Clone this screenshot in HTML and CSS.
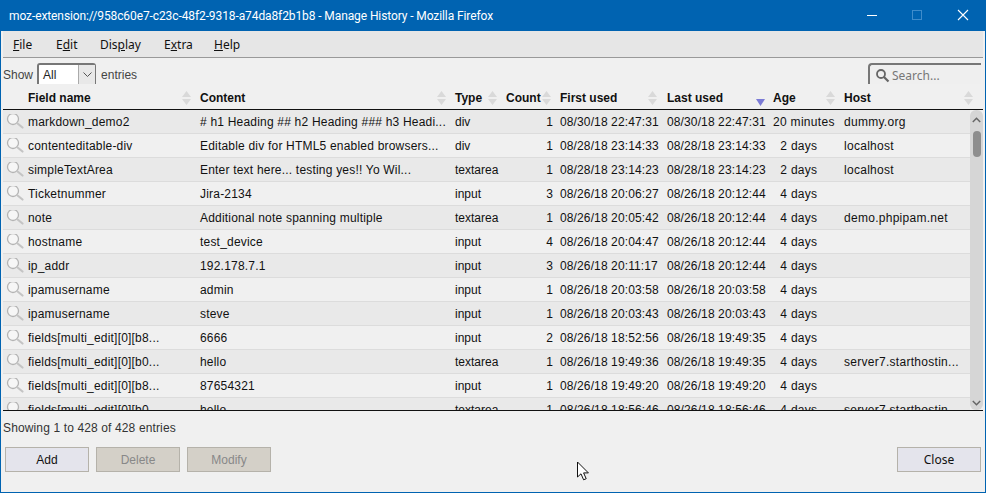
FILE: index.html
```html
<!DOCTYPE html>
<html lang="en">
<head>
  <meta charset="UTF-8" />
  <title>Manage History</title>
  <link rel="stylesheet" href="styles.css">
</head>
<body>
  <svg class="defs" width="0" height="0">
    <symbol id="lens" viewBox="0 0 18 18">
      <circle cx="7" cy="7" r="5.5" fill="#f6f6f6" stroke="#b4b4b4" stroke-width="1.3"/>
      <path d="M11 11l5.5 4.5" stroke="#c4c4c4" stroke-width="2.2" stroke-linecap="round"/>
    </symbol>
  </svg>
  <div class="window">
    <div class="titlebar">
      <span class="title">moz-extension://958c60e7-c23c-48f2-9318-a74da8f2b1b8 - Manage History - Mozilla Firefox</span>
      <svg class="winbtns" width="102" height="31" viewBox="0 0 102 31">
        <path d="M0 15.5h10" stroke="#fff" fill="none"/>
        <rect x="45.5" y="10.5" width="9" height="9" stroke="#3f8ccb" fill="none"/>
        <path d="M91 10l10 10M101 10l-10 10" stroke="#fff" fill="none" stroke-width="1.1"/>
      </svg>
    </div>
    <div class="menubar">
      <span class="menu menu-file"><u>F</u>ile</span>
      <span class="menu menu-edit">E<u>d</u>it</span>
      <span class="menu menu-display">Dis<u>p</u>lay</span>
      <span class="menu menu-extra">E<u>x</u>tra</span>
      <span class="menu"><u>H</u>elp</span>
    </div>
    <div class="toolbar">
      <div class="length">
        <span>Show</span>
        <div class="select">
          <span class="select-value">All</span>
          <span class="select-arrow">
            <svg width="9" height="5" viewBox="0 0 9 5"><path d="M.5.5l4 4 4-4" fill="none" stroke="#555"/></svg>
          </span>
        </div>
        <span>entries</span>
      </div>
      <div class="search">
        <svg width="15" height="15" viewBox="0 0 15 15"><circle cx="6" cy="6" r="4" fill="none" stroke="#666" stroke-width="1.8"/><path d="M9 9l4.5 4.5" stroke="#666" stroke-width="2.2"/></svg>
        <span>Search...</span>
      </div>
    </div>
    <div class="thead" id="thead"></div>
    <div class="tbody-wrap">
      <div class="rows" id="rows"></div>
      <div class="scrollbar">
        <svg width="9" height="6" viewBox="0 0 9 6"><path d="M.8 5l3.7-3.7L8.2 5" fill="none" stroke="#666" stroke-width="1.5"/></svg>
        <div class="thumb"></div>
        <svg class="scroll-down" width="9" height="6" viewBox="0 0 9 6"><path d="M.8 1l3.7 3.7L8.2 1" fill="none" stroke="#666" stroke-width="1.5"/></svg>
      </div>
    </div>
    <div class="info">Showing 1 to 428 of 428 entries</div>
    <div class="buttons">
      <button class="btn">Add</button>
      <button class="btn" disabled>Delete</button>
      <button class="btn" disabled>Modify</button>
      <button class="btn btn-close">Close</button>
    </div>
  </div>
  <svg class="cursor" width="14" height="21" viewBox="0 0 14 21">
    <path d="M1.5 1v15l3.5-3.2 2.6 6 2.6-1.1-2.6-5.8h4.8z" fill="#fff" stroke="#111"/>
  </svg>

  <script>
    const columnas = [
      ["Field name", "c-name"], ["Content", "c-content"], ["Type", "c-type"], ["Count", "c-count"],
      ["First used", "c-first"], ["Last used", "c-last"], ["Age", "c-age"], ["Host", "c-host"]
    ];

    const dos = "\u00a0\u00a02 days";
    const cuatro = "\u00a0\u00a04 days";

    const filas = [
      ["markdown_demo2", "# h1 Heading ## h2 Heading ### h3 Headi...", "div", 1, "08/30/18 22:47:31", "08/30/18 22:47:31", "20 minutes", "dummy.org"],
      ["contenteditable-div", "Editable div for HTML5 enabled browsers...", "div", 1, "08/28/18 23:14:33", "08/28/18 23:14:33", dos, "localhost"],
      ["simpleTextArea", "Enter text here... testing yes!! Yo Wil...", "textarea", 1, "08/28/18 23:14:23", "08/28/18 23:14:23", dos, "localhost"],
      ["Ticketnummer", "Jira-2134", "input", 3, "08/26/18 20:06:27", "08/26/18 20:12:44", cuatro, ""],
      ["note", "Additional note spanning multiple", "textarea", 1, "08/26/18 20:05:42", "08/26/18 20:12:44", cuatro, "demo.phpipam.net"],
      ["hostname", "test_device", "input", 4, "08/26/18 20:04:47", "08/26/18 20:12:44", cuatro, ""],
      ["ip_addr", "192.178.7.1", "input", 3, "08/26/18 20:11:17", "08/26/18 20:12:44", cuatro, ""],
      ["ipamusername", "admin", "input", 1, "08/26/18 20:03:58", "08/26/18 20:03:58", cuatro, ""],
      ["ipamusername", "steve", "input", 1, "08/26/18 20:03:43", "08/26/18 20:03:43", cuatro, ""],
      ["fields[multi_edit][0][b8...", "6666", "input", 2, "08/26/18 18:52:56", "08/26/18 19:49:35", cuatro, ""],
      ["fields[multi_edit][0][b0...", "hello", "textarea", 1, "08/26/18 19:49:36", "08/26/18 19:49:35", cuatro, "server7.starthostin..."],
      ["fields[multi_edit][0][b8...", "87654321", "input", 1, "08/26/18 19:49:20", "08/26/18 19:49:20", cuatro, ""],
      ["fields[multi_edit][0][b0...", "hello", "textarea", 1, "08/26/18 18:56:46", "08/26/18 18:56:46", cuatro, "server7.starthostin..."]
    ];

    document.getElementById("thead").innerHTML = columnas.map(([nombre, clase]) => {
      const orden = nombre === "Last used"
        ? '<svg class="sort" width="9" height="7" viewBox="0 0 9 7"><path d="M0 0h9L4.5 7z" fill="#7b7bd6"/></svg>'
        : '<svg class="sort" width="9" height="16" viewBox="0 0 9 16"><path d="M4.5 1L9 7H0zM0 9h9l-4.5 6z" fill="#d9d9d9"/></svg>';
      return `<div class="th ${clase}"><span>${nombre}</span>${orden}</div>`;
    }).join("");

    document.getElementById("rows").innerHTML = filas.map(fila => {
      const celdas = fila.map((valor, i) => {
        const lupa = i === 0 ? '<svg class="lens" width="18" height="18"><use href="#lens"/></svg>' : "";
        return `<div class="td ${columnas[i][1]}">${lupa}<span>${valor}</span></div>`;
      }).join("");
      return `<div class="row">${celdas}</div>`;
    }).join("");
  </script>
</body>
</html>
```

FILE: styles.css
```css
html, body {
  margin: 0;
  height: 100%;
  overflow: hidden;
}

body {
  font-family: "Liberation Sans", Arial, sans-serif;
  font-size: 12px;
  color: #111;
  background: #f0f0f0;
}

.defs {
  display: block;
  height: 0;
}

.window {
  width: 986px;
  height: 493px;
  box-sizing: border-box;
  border: solid #0063b1;
  border-width: 0 1px 1px 1px;
  display: flex;
  flex-direction: column;
  position: relative;
}

.titlebar {
  height: 31px;
  flex: none;
  background: #0063b1;
  color: #fff;
  font-family: Roboto, sans-serif;
  letter-spacing: -0.1px;
  display: flex;
  align-items: center;
  justify-content: space-between;
  padding-left: 8px;
}

.winbtns {
  margin-right: 16px;
}

.menubar {
  height: 26px;
  flex: none;
  margin: 0 2px;
  background: #e6e6e6;
  border-bottom: 1px solid #999;
  display: flex;
  align-items: center;
  padding-left: 10px;
  font-family: "Noto Sans", sans-serif;
}

.menu {
  width: 43px;
}

.menu-edit {
  width: 44px;
}

.menu-display {
  width: 64px;
}

.menu-extra {
  width: 50px;
}

.toolbar {
  height: 30px;
  flex: none;
  box-sizing: border-box;
  margin-left: 2px;
  padding-top: 5px;
  display: flex;
  align-items: flex-start;
  justify-content: space-between;
  color: #444;
}

.length {
  display: flex;
  align-items: center;
  gap: 4px;
  height: 24px;
}

.length > span:last-child {
  margin-left: 1px;
}

.select {
  width: 59px;
  height: 21px;
  box-sizing: border-box;
  border: solid #777;
  border-width: 2px 1px 0 2px;
  border-radius: 3px 3px 0 0;
  background: #fff;
  display: flex;
  justify-content: space-between;
  align-items: center;
  align-self: flex-start;
}

.select-value {
  padding-left: 4px;
  color: #222;
}

.select-arrow {
  width: 16px;
  height: 19px;
  background: #e8e8e8;
  border-left: 1px solid #aaa;
  display: flex;
  align-items: center;
  justify-content: center;
}

.search {
  width: 113px;
  height: 21px;
  box-sizing: border-box;
  margin-right: 4px;
  padding: 1px 0 0 5px;
  border: solid #777;
  border-width: 2px 0 0 2px;
  border-radius: 4px 0 0 0;
  background: #efefef;
  display: flex;
  align-items: center;
  gap: 2px;
  font-family: "Noto Sans", sans-serif;
  color: #777;
}

.thead {
  height: 22px;
  flex: none;
  box-sizing: border-box;
  margin: 0 2px;
  padding-bottom: 2px;
  display: flex;
  border-bottom: 1px solid #111;
}

.th {
  font-weight: bold;
  display: flex;
  align-items: center;
  justify-content: space-between;
  box-sizing: border-box;
}

.th .sort {
  margin-right: 3px;
}

.tbody-wrap {
  height: 301px;
  flex: none;
  box-sizing: border-box;
  margin: 0 2px;
  border-bottom: 1px solid #111;
  display: flex;
  overflow: hidden;
}

.rows {
  width: 967px;
  flex: none;
}

.row {
  height: 24px;
  box-sizing: border-box;
  display: flex;
  border-bottom: 1px solid #dcdcdc;
  align-items: center;
  background: #f0f0f0;
}

.row:nth-child(odd) {
  background: #e9e9e9;
}

.td {
  box-sizing: border-box;
  white-space: nowrap;
  overflow: hidden;
  display: flex;
  align-items: center;
  letter-spacing: 0.2px;
}

.lens {
  flex: none;
  margin: -2px 4px 0 3px;
  width: 18px;
  height: 18px;
}

.c-name {
  width: 191px;
}

.th.c-name {
  padding-left: 25px;
}

.c-content {
  width: 255px;
  padding-left: 6px;
}

.c-type {
  width: 51px;
  padding-left: 6px;
}

.td.c-type {
  letter-spacing: 0;
}

.c-count {
  width: 54px;
  padding-left: 6px;
}

.td.c-count {
  justify-content: flex-end;
  padding-right: 1px;
}

.c-first {
  width: 107px;
  padding-left: 6px;
}

.c-last {
  width: 106px;
  padding-left: 6px;
}

.td.c-first, .td.c-last {
  letter-spacing: 0.12px;
}

.c-age {
  width: 71px;
  padding-left: 6px;
}

.td.c-age {
  letter-spacing: 0.3px;
}

.c-host {
  width: 131px;
  padding-left: 6px;
}

.td.c-host {
  letter-spacing: 0.28px;
}

.th.c-host {
  width: 138px;
}

.th.c-first .sort {
  margin-right: 4px;
}

.th.c-last .sort {
  margin: 9px 2px 0 0;
}

.scrollbar {
  width: 13px;
  flex: none;
  background: #d6d6d6;
  border-radius: 6px;
  display: flex;
  flex-direction: column;
  align-items: center;
  padding-top: 7px;
  box-sizing: border-box;
}

.thumb {
  width: 8px;
  height: 26px;
  margin-top: 8px;
  border-radius: 4px;
  background: #8e8e8e;
}

.scroll-down {
  margin-top: auto;
  margin-bottom: 4px;
}

.info {
  flex: none;
  margin: 10px 0 0 2px;
  height: 14px;
  line-height: 14px;
  color: #333;
  letter-spacing: 0.13px;
}

.buttons {
  flex: none;
  margin: 12px 4px 0 4px;
  display: flex;
  gap: 7px;
}

.btn {
  width: 84px;
  height: 25px;
  box-sizing: border-box;
  padding: 0;
  border: 1px solid #b5b2aa;
  background: #e4e4ec;
  color: #111;
  font: 12px "Liberation Sans", Arial, sans-serif;
}

.btn:disabled {
  background: #d4d0c8;
  color: #888;
}

.btn-close {
  margin-left: auto;
  font-family: "Noto Sans", sans-serif;
}

.cursor {
  position: absolute;
  left: 576px;
  top: 461px;
}
```
